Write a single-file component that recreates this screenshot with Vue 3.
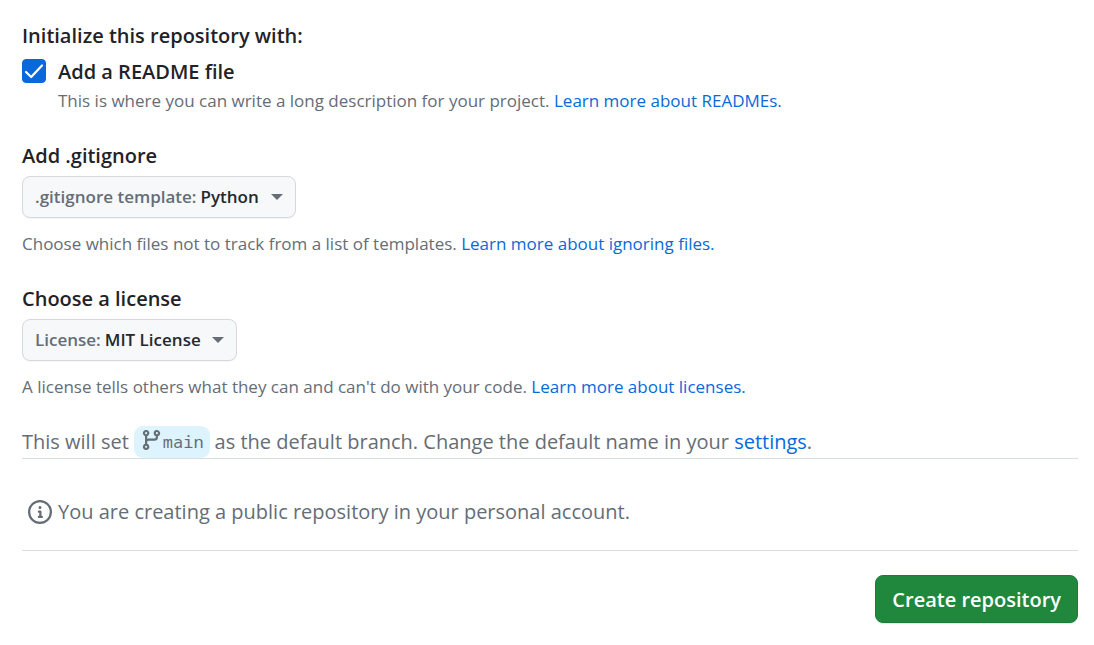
<script setup>
import { ref } from 'vue'

const readme = ref(true)
const template = ref('Python')
const license = ref('MIT License')
</script>

<template>
  <form class="page" @submit.prevent>
    <section class="group">
      <h2 class="heading">Initialize this repository with:</h2>
      <div class="check-row">
        <span class="check">
          <input id="readme" v-model="readme" type="checkbox" aria-describedby="readme-note" />
          <svg v-if="readme" class="tick" viewBox="0 0 24 24" aria-hidden="true">
            <path d="M4 13 9.2 18 20 6.5" />
          </svg>
        </span>
        <div class="check-text">
          <label for="readme" class="heading">Add a README file</label>
          <p id="readme-note" class="note">
            This is where you can write a long description for your project.
            <a href="#readmes">Learn more about READMEs.</a>
          </p>
        </div>
      </div>
    </section>

    <section class="group">
      <h2 class="heading">Add .gitignore</h2>
      <div class="picker">
        <label for="template">.gitignore template:</label>
        <select id="template" v-model="template">
          <option>Python</option>
        </select>
        <svg class="caret" viewBox="0 0 12 6" aria-hidden="true"><path d="M0 0h12L6 6z" /></svg>
      </div>
      <p class="note">
        Choose which files not to track from a list of templates.
        <a href="#ignoring">Learn more about ignoring files.</a>
      </p>
    </section>

    <section class="group">
      <h2 class="heading">Choose a license</h2>
      <div class="picker">
        <label for="license">License:</label>
        <select id="license" v-model="license">
          <option>MIT License</option>
        </select>
        <svg class="caret" viewBox="0 0 12 6" aria-hidden="true"><path d="M0 0h12L6 6z" /></svg>
      </div>
      <p class="note">
        A license tells others what they can and can't do with your code.
        <a href="#licenses">Learn more about licenses.</a>
      </p>
    </section>

    <div class="branch-line">
      <span>This will set</span>
      <span class="branch">
        <svg class="branch-icon" viewBox="0 0 16 16" aria-hidden="true">
          <path d="M9.5 3.25a2.25 2.25 0 1 1 3 2.122V6A2.5 2.5 0 0 1 10 8.5H6a1 1 0 0 0-1 1v1.128a2.251 2.251 0 1 1-1.5 0V5.372a2.25 2.25 0 1 1 1.5 0v1.836A2.493 2.493 0 0 1 6 7h4a1 1 0 0 0 1-1v-.628A2.25 2.25 0 0 1 9.5 3.25Zm-6 0a.75.75 0 1 0 1.5 0 .75.75 0 0 0-1.5 0Zm8.25-.75a.75.75 0 1 0 0 1.5.75.75 0 0 0 0-1.5ZM4.25 12a.75.75 0 1 0 0 1.5.75.75 0 0 0 0-1.5Z" />
        </svg>
        <code>main</code>
      </span>
      <span>as the default branch. Change the default name in your <a href="#settings">settings</a>.</span>
    </div>

    <div class="info">
      <svg class="info-icon" viewBox="0 0 16 16" aria-hidden="true">
        <path d="M0 8a8 8 0 1 1 16 0A8 8 0 0 1 0 8Zm8-6.5a6.5 6.5 0 1 0 0 13 6.5 6.5 0 0 0 0-13ZM6.5 7.75A.75.75 0 0 1 7.25 7h1a.75.75 0 0 1 .75.75v2.75h.25a.75.75 0 0 1 0 1.5h-2a.75.75 0 0 1 0-1.5h.25v-2h-.25a.75.75 0 0 1-.75-.75ZM8 6a1 1 0 1 1 0-2 1 1 0 0 1 0 2Z" />
      </svg>
      <span>You are creating a public repository in your personal account.</span>
    </div>

    <div class="actions">
      <button type="submit" class="create">Create repository</button>
    </div>
  </form>
</template>

<style>
body {
  margin: 0;
  background: #ffffff;
}
</style>

<style scoped>
.page {
  padding: 20px 16px 20px 22px;
  color: #1f2328;
  font-family: "Segoe UI", "Open Sans", "Noto Sans", sans-serif;
  font-size: 20px;
  line-height: 32px;
}
.group {
  margin-bottom: 26px;
}
.heading {
  display: block;
  margin: 0;
  font-size: 20px;
  font-weight: 600;
  line-height: 32px;
}
a {
  color: #0969da;
  text-decoration: none;
}
.note {
  margin: 0;
  color: #656d76;
  font-size: 17px;
  line-height: 26px;
}
.check-row {
  display: flex;
  gap: 12px;
  margin-top: 4px;
}
.check {
  position: relative;
  width: 24px;
  height: 24px;
  margin-top: 3px;
}
.check input {
  display: block;
  box-sizing: border-box;
  width: 24px;
  height: 24px;
  margin: 0;
  appearance: none;
  border: 1px solid #8c959f;
  border-radius: 4px;
}
.check input:checked {
  border-color: #0969da;
  background: #0969da;
}
.tick {
  position: absolute;
  inset: 0;
  width: 24px;
  height: 24px;
  fill: none;
  stroke: #ffffff;
  stroke-width: 2.2;
  stroke-linecap: round;
  stroke-linejoin: round;
  pointer-events: none;
}
.picker {
  display: flex;
  align-items: center;
  box-sizing: border-box;
  width: fit-content;
  height: 42px;
  margin: 4px 0 13px;
  padding: 0 12px;
  border: 1px solid #d5d9de;
  border-radius: 8px;
  background: #f6f8fa;
  box-shadow: 0 1px 0 rgba(31, 35, 40, 0.04);
  color: #656d76;
  font-size: 17px;
  font-weight: 600;
}
.picker select {
  margin: 0 11px 0 4px;
  padding: 0;
  appearance: none;
  border: 0;
  background: transparent;
  color: #24292f;
  font: inherit;
}
.caret {
  width: 12px;
  height: 6px;
  fill: #656d76;
}
.branch-line {
  display: flex;
  align-items: center;
  gap: 5px;
  border-bottom: 1px solid #d8dee4;
  color: #656d76;
}
.branch {
  display: flex;
  align-items: center;
  height: 32px;
  padding: 0 6px;
  border-radius: 9px;
  background: #ddf4ff;
}
.branch-icon {
  width: 23px;
  height: 24px;
  margin-bottom: 4px;
  fill: #656d76;
}
.branch code {
  font-family: Consolas, "Noto Sans Mono", "Liberation Mono", monospace;
  font-size: 17px;
}
.info {
  display: flex;
  align-items: center;
  gap: 6px;
  padding: 37px 6px 22px;
  border-bottom: 1px solid #d8dee4;
  color: #656d76;
}
.info-icon {
  width: 24px;
  height: 24px;
  fill: #656d76;
}
.actions {
  display: flex;
  justify-content: flex-end;
  padding-top: 24px;
}
.create {
  height: 48px;
  padding: 0 16px;
  border: 1px solid #1c7c38;
  border-radius: 8px;
  background: #1f883d;
  box-shadow: 0 1px 0 rgba(31, 35, 40, 0.1);
  color: #ffffff;
  font-family: inherit;
  font-size: 20px;
  font-weight: 600;
}
</style>
